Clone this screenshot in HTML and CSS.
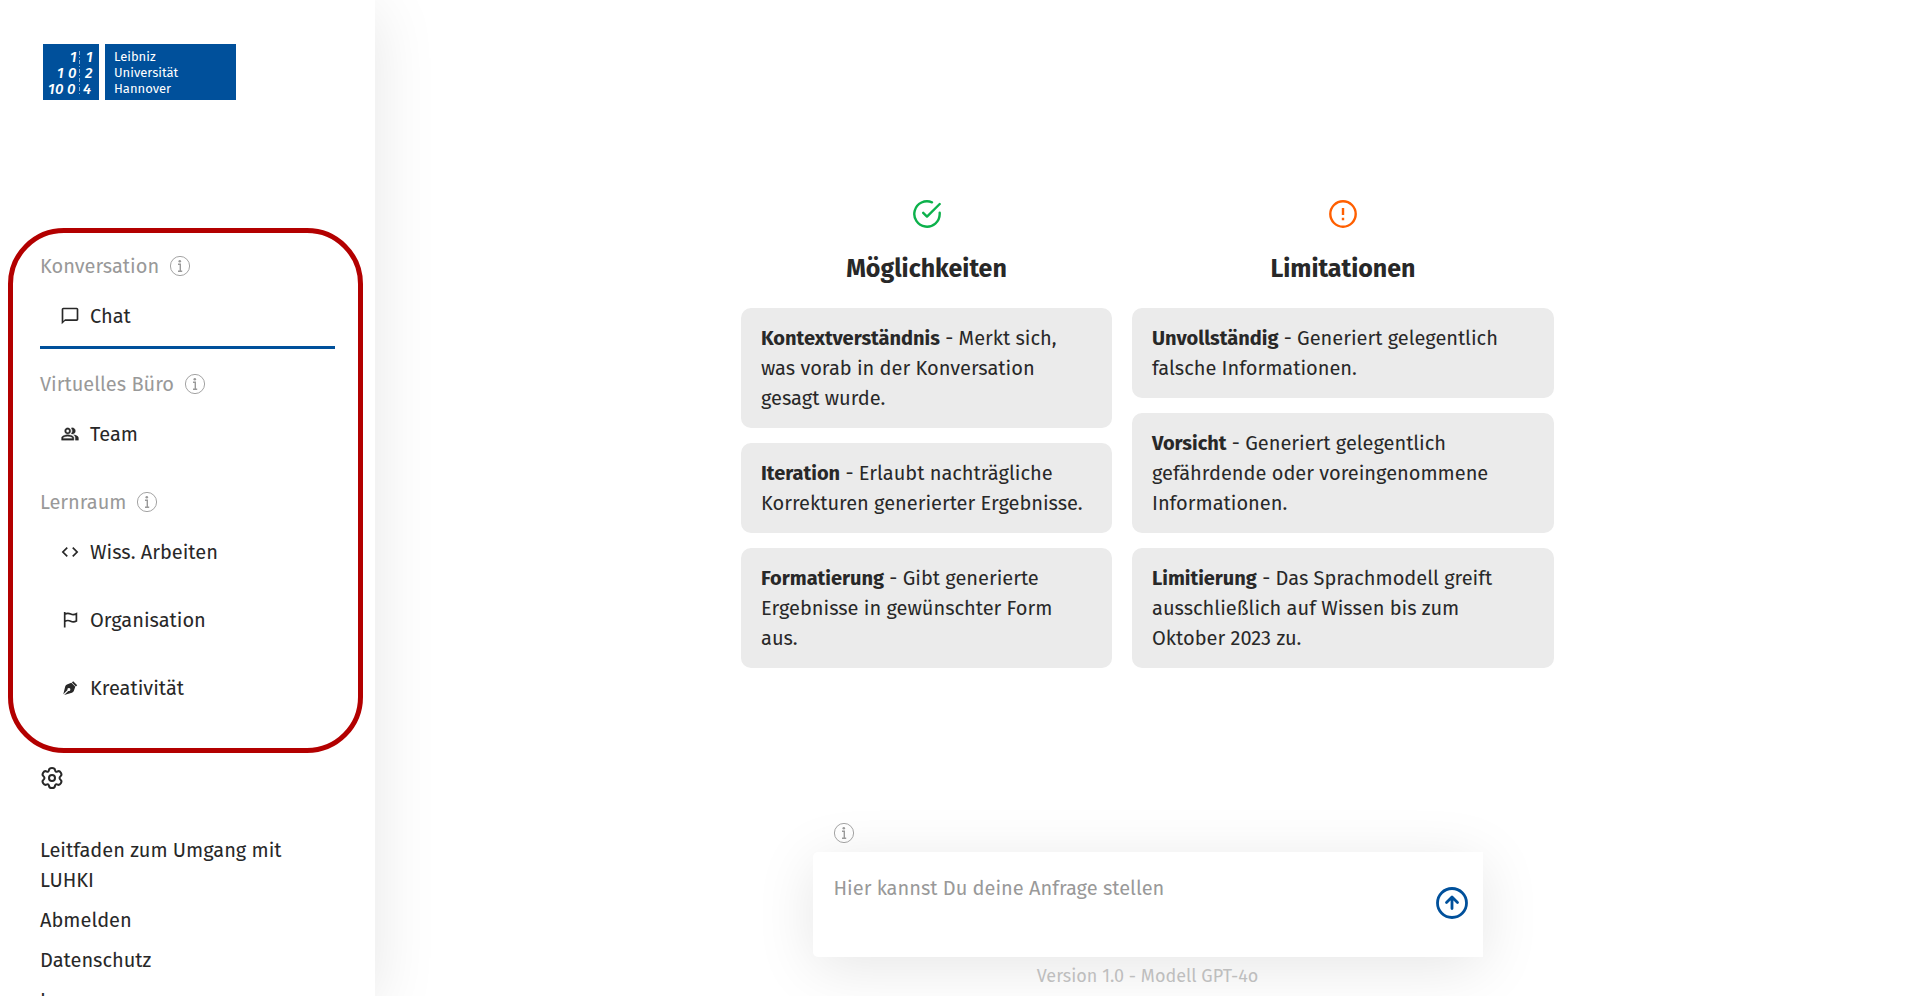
FILE: index.html
```html
<!DOCTYPE html>
<html lang="de">
<head>
    <meta charset="UTF-8">
    <meta name="viewport" content="width=device-width, initial-scale=1.0">
    <title>LUHKI</title>
    <link rel="stylesheet" href="styles.css">
</head>
<body>

    <!-- Icon wird mehrfach verwendet -->
    <svg class="sprite" aria-hidden="true">
        <symbol id="info" viewBox="0 0 20 20">
            <circle cx="10" cy="10" r="9.6" fill="none" stroke="currentColor" stroke-width="0.9"/>
            <circle cx="9.8" cy="5.3" r="1.3" fill="currentColor"/>
            <path d="M8 8.300h2.300v6.600M8 15.300h4.200" fill="none" stroke="currentColor" stroke-width="1.400"/>
        </symbol>
    </svg>

    <aside class="sidebar">
        <a href="#" class="logo" aria-label="Leibniz Universität Hannover">
            <svg width="193" height="56" viewBox="0 0 193 56">
                <rect width="56" height="56" fill="#00509b"/>
                <rect x="62" width="131" height="56" fill="#00509b"/>
                <path d="M36.500 7v44" stroke="#fff" stroke-width="0.8" stroke-dasharray="4 2 1 2" opacity="0.7"/>
                <g class="logo-digits">
                    <text x="27" y="18">1</text>
                    <text x="43" y="18">1</text>
                    <text x="14" y="34">1</text>
                    <text x="25" y="34">0</text>
                    <text x="42" y="34">2</text>
                    <text x="5" y="50">1</text>
                    <text x="12" y="50">0</text>
                    <text x="24" y="50">0</text>
                    <text x="40" y="50">4</text>
                </g>
                <g class="logo-name">
                    <text x="71" y="17">Leibniz</text>
                    <text x="71" y="33">Universität</text>
                    <text x="71" y="49">Hannover</text>
                </g>
            </svg>
        </a>

        <nav class="nav">
            <h2 class="nav-label">Konversation <button class="info" aria-label="Info Konversation"><svg><use href="#info"/></svg></button></h2>
            <a href="#" class="nav-item active">
                <svg viewBox="0 0 24 24"><path d="M20 2H4c-1.100 0-2 .9-2 2v18l4-4h14c1.100 0 2-.9 2-2V4c0-1.100-.9-2-2-2zm0 14H6l-2 2V4h16v12z"/></svg>
                Chat
            </a>

            <h2 class="nav-label">Virtuelles Büro <button class="info" aria-label="Info Virtuelles Büro"><svg><use href="#info"/></svg></button></h2>
            <a href="#" class="nav-item">
                <svg viewBox="-1 0 26 24" stroke="currentColor" stroke-width="0.4"><path d="M16.670 13.130C18.040 14.060 19 15.320 19 17v3h4v-3c0-2.180-3.570-3.470-6.330-3.870zM15 12c2.210 0 4-1.790 4-4s-1.790-4-4-4c-.47 0-.91.1-1.330.24a5.980 5.980 0 0 1 0 7.520c.42.14.86.24 1.330.24zM9 12c2.210 0 4-1.790 4-4s-1.790-4-4-4-4 1.790-4 4 1.790 4 4 4zm0-6c1.100 0 2 .9 2 2s-.9 2-2 2-2-.9-2-2 .9-2 2-2zM9 13c-2.670 0-8 1.340-8 4v3h16v-3c0-2.660-5.330-4-8-4zm6 5H3v-.99C3.200 16.290 6.300 15 9 15s5.800 1.290 6 2v1z"/></svg>
                Team
            </a>

            <h2 class="nav-label">Lernraum <button class="info" aria-label="Info Lernraum"><svg><use href="#info"/></svg></button></h2>
            <a href="#" class="nav-item">
                <svg viewBox="0 0 24 24"><path d="M9.400 16.600 4.800 12l4.600-4.600L8 6l-6 6 6 6zm5.200 0 4.600-4.600-4.600-4.600L16 6l6 6-6 6z"/></svg>
                Wiss. Arbeiten
            </a>
            <a href="#" class="nav-item">
                <svg viewBox="0 0 20 20"><path d="M4.700 2v15.500M4.700 4.300c2-1.300 4-1.300 6-.3s3.500 1 5.700-.2v7.200c-2.200 1.200-3.700 1.200-5.700.2s-4-1-6 .3" fill="none" stroke="currentColor" stroke-width="1.700"/></svg>
                Organisation
            </a>
            <a href="#" class="nav-item">
                <svg viewBox="0 0 20 20"><path d="M13.200 3.200l4 4-1.300 1.300-4-4zM11.300 4.800l4 4-1.500 4.200c-.3.900-1 1.500-1.900 1.800L4.200 17l4.100-4.100a1.500 1.500 0 1 0-.8-.8L3.300 16.200 5.200 8.400c.3-.9.9-1.600 1.800-1.900z"/></svg>
                Kreativität
            </a>
            <div class="marker"></div>
        </nav>

        <button class="settings" aria-label="Einstellungen">
            <svg width="24" height="24" viewBox="0 0 24 24" fill="none" stroke="currentColor" stroke-width="2" stroke-linejoin="round">
                <circle cx="12" cy="12" r="3"/>
                <path d="M9 4C9.400 1.300 14.600 1.300 15 4C15.200 5.700 16.200 6.200 17.500 5.400C20.200 4.200 22.800 8.600 20.500 10.200C19.200 11.300 19.200 12.700 20.500 13.800C22.800 15.400 20.200 19.800 17.500 18.600C16.200 17.800 15.200 18.300 15 20C14.600 22.700 9.400 22.700 9 20C8.800 18.300 7.800 17.800 6.500 18.600C3.800 19.800 1.200 15.400 3.500 13.800C4.800 12.700 4.800 11.300 3.500 10.200C1.200 8.600 3.800 4.200 6.500 5.400C7.800 6.200 8.800 5.700 9 4Z"/>
            </svg>
        </button>

        <ul class="links">
            <li><a href="#">Leitfaden zum Umgang mit LUHKI</a></li>
            <li><a href="#">Abmelden</a></li>
            <li><a href="#">Datenschutz</a></li>
            <li><a href="#">Impressum</a></li>
        </ul>
    </aside>

    <main class="main">
        <div class="intro">
            <section class="column">
                <svg class="ok" viewBox="0 0 28 28" fill="none" stroke="currentColor" stroke-width="2.400" stroke-linecap="round" stroke-linejoin="round">
                    <path d="M26.700 12.700V14A12.700 12.700 0 1 1 19 2.300"/>
                    <path d="M26.700 4 14 16.600l-3.800-3.800"/>
                </svg>
                <h1>Möglichkeiten</h1>
                <p><strong>Kontextverständnis</strong> - Merkt sich, was vorab in der Konversation gesagt wurde.</p>
                <p><strong>Iteration</strong> - Erlaubt nachträgliche Korrekturen generierter Ergebnisse.</p>
                <p><strong>Formatierung</strong> - Gibt generierte Ergebnisse in gewünschter Form aus.</p>
            </section>
            <section class="column">
                <svg class="warn" viewBox="0 0 28 28" fill="none" stroke="currentColor" stroke-width="2.400">
                    <circle cx="14" cy="14" r="12.700"/>
                    <path d="M14 8v7M14 17.800v2.400"/>
                </svg>
                <h1>Limitationen</h1>
                <p><strong>Unvollständig</strong> - Generiert gelegentlich falsche Informationen.</p>
                <p><strong>Vorsicht</strong> - Generiert gelegentlich gefährdende oder voreingenommene Informationen.</p>
                <p><strong>Limitierung</strong> - Das Sprachmodell greift ausschließlich auf Wissen bis zum Oktober 2023 zu.</p>
            </section>
        </div>

        <form class="prompt">
            <button type="button" class="info" aria-label="Info Anfrage"><svg><use href="#info"/></svg></button>
            <div class="prompt-box">
                <textarea aria-label="Anfrage" placeholder="Hier kannst Du deine Anfrage stellen"></textarea>
                <button type="button" class="send" aria-label="Senden">
                    <svg width="32" height="32" viewBox="0 0 32 32" fill="none" stroke="currentColor" stroke-width="2.800" stroke-linecap="round" stroke-linejoin="round">
                        <circle cx="16" cy="16" r="14.500"/>
                        <path d="M16 21.500v-11M10.500 15.500l5.500-5.500 5.500 5.500"/>
                    </svg>
                </button>
            </div>
            <small>Version 1.0 - Modell GPT-4o</small>
        </form>
    </main>

</body>
</html>
```

FILE: styles.css
```css
* {
    box-sizing: border-box;
}

body {
    display: flex;
    height: 100vh;
    margin: 0;
    overflow: hidden;
    background-color: #fff;
    color: #282828;
    font-family: "Fira Sans", "Noto Sans", sans-serif;
    font-size: 20px;
    line-height: 30px;
}

a {
    color: inherit;
    text-decoration: none;
}

button {
    padding: 0;
    border: none;
    background: none;
    color: inherit;
    cursor: pointer;
}

button svg {
    display: block;
}

.sprite {
    position: absolute;
    width: 0;
    height: 0;
}

/* Sidebar */

.sidebar {
    flex: 0 0 375px;
    height: 100vh;
    padding: 44px 40px 0;
    overflow: hidden;
    background-color: #fff;
    box-shadow: 0 10px 60px rgba(0, 0, 0, 0.1);
}

.logo {
    display: block;
    height: 56px;
    padding-left: 3px;
    margin-bottom: 151px;
}

.logo svg {
    display: block;
}

.logo-digits {
    fill: #fff;
    font-size: 15px;
    font-style: italic;
    font-weight: 500;
}

.logo-name {
    fill: #fff;
    font-size: 13px;
}

.nav {
    position: relative;
}

.nav-label {
    display: flex;
    align-items: center;
    gap: 11px;
    margin: 20px 0 0;
    color: #999;
    font-size: 20px;
    font-weight: normal;
}

.nav-label:first-child {
    margin-top: 0;
}

.info {
    color: #999;
}

.info svg {
    width: 20px;
    height: 20px;
}

.nav-item {
    display: flex;
    align-items: center;
    gap: 10px;
    padding: 20px 20px 15px;
    border-bottom: 3px solid transparent;
}

.nav-item.active {
    border-bottom-color: #00509b;
}

.nav-item svg {
    width: 20px;
    height: 20px;
    fill: currentColor;
}

.marker {
    position: absolute;
    inset: -23px -28px -32px -32px;
    border: 5px solid #b30000;
    border-radius: 56px;
    pointer-events: none;
}

.settings {
    display: block;
    margin: 45px 0;
}

.links {
    display: flex;
    flex-direction: column;
    gap: 10px;
    margin: 0;
    padding: 0;
    list-style: none;
}

/* Hauptbereich */

.main {
    display: flex;
    flex: 1;
    flex-direction: column;
    align-items: center;
    justify-content: space-between;
    padding: 200px 20px 5px;
}

.intro {
    display: grid;
    grid-template-columns: 371fr 422fr;
    gap: 20px;
    width: 100%;
    max-width: 813px;
}

.column {
    display: flex;
    flex-direction: column;
    gap: 15px;
}

.column svg {
    align-self: center;
    width: 28px;
    height: 28px;
}

.ok {
    color: #0cb14b;
}

.warn {
    color: #ff5f00;
}

.column h1 {
    margin: 6px 0 4px;
    font-size: 25px;
    line-height: 40px;
    text-align: center;
}

.column p {
    margin: 0;
    padding: 15px 20px;
    border-radius: 10px;
    background-color: #ebebeb;
}

.prompt {
    display: flex;
    flex-direction: column;
    width: 100%;
    max-width: 670px;
}

.prompt .info {
    align-self: flex-start;
    margin: 0 0 9px 21px;
    z-index: 1;
}

.prompt-box {
    display: flex;
    align-items: center;
    padding: 0 15px 3px 0;
    border-radius: 5px 0 0 5px;
    background-color: #fff;
    box-shadow: 0 10px 60px rgba(0, 0, 0, 0.1);
}

.prompt textarea {
    flex: 1;
    height: 102px;
    padding: 21px;
    border: none;
    outline: none;
    resize: none;
    background: none;
    color: inherit;
    font: inherit;
}

.prompt textarea::placeholder {
    color: #999;
}

.send {
    color: #00509b;
}

.prompt small {
    margin-top: 4px;
    color: #bebebe;
    font-size: 18px;
    text-align: center;
}
```
